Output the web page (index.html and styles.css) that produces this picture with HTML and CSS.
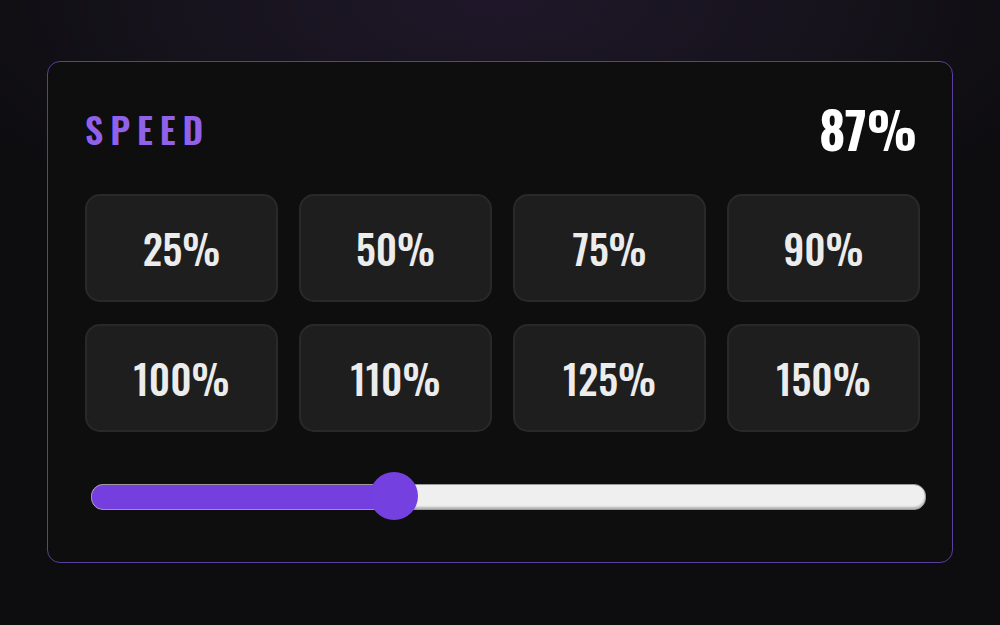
FILE: index.html
```html
<!DOCTYPE html>
<html lang="en">
<head>
    <meta charset="UTF-8">
    <meta name="viewport" content="width=device-width, initial-scale=1.0">
    <link rel="stylesheet" href="styles.css">
</head>
<body>
    <div id="panel">
        <div class="panel-header">
            <h2 class="title">SPEED</h2>
            <span class="value">87%</span>
        </div>
        <div class="presets">
            <button class="preset">25%</button>
            <button class="preset">50%</button>
            <button class="preset">75%</button>
            <button class="preset">90%</button>
            <button class="preset">100%</button>
            <button class="preset">110%</button>
            <button class="preset">125%</button>
            <button class="preset">150%</button>
        </div>
        <div class="slider">
            <div class="track">
                <div class="fill" style="width: 36.3%"></div>
            </div>
            <div class="thumb" style="left: 36.3%"></div>
        </div>
    </div>
</body>
</html>
```

FILE: styles.css
```css
body {
    margin: 0;
    height: 625px;
    background: radial-gradient(ellipse 600px 260px at 50% 0%, #1f1729 0%, #16131c 55%, #0d0c0f 100%);
    background-color: #0d0c0f;
    font-family: "Oswald", "Liberation Sans Narrow", "DejaVu Sans Condensed", "Roboto Condensed", sans-serif;
    padding: 61px 47px 0;
    box-sizing: border-box;
}
#panel {
    background-color: #0e0e0e;
    border: 1px solid #5b3f9c;
    border-radius: 13px;
    height: 502px;
    box-sizing: border-box;
    padding: 0 32px 0 37px;
}
.panel-header {
    display: flex;
    justify-content: space-between;
    align-items: center;
    height: 132px;
    padding-right: 3px;
}
.title {
    margin: 0;
    color: #9261ea;
    font-size: 36px;
    font-weight: 600;
    letter-spacing: 7px;
}
.value {
    color: #ffffff;
    font-size: 50px;
    font-weight: bold;
}
.presets {
    display: grid;
    grid-template-columns: repeat(4, 1fr);
    gap: 22px 21px;
}
.preset {
    height: 108px;
    background-color: #1e1e1e;
    border: 2px solid #292929;
    border-radius: 15px;
    color: #ececec;
    font-family: inherit;
    font-size: 40px;
    font-weight: 500;
}
.slider {
    position: relative;
    margin: 52px 0 0 6px;
    height: 26px;
    margin-right: -6px;
}
.track {
    height: 24px;
    background-color: #efefef;
    border-radius: 12px;
    border: 1px solid #9a9a9a;
    box-shadow: inset 0 -2px 2px #b5b5b5;
    overflow: hidden;
}
.fill {
    height: 100%;
    background-color: #753fe0;
}
.thumb {
    position: absolute;
    top: -12px;
    width: 48px;
    height: 48px;
    margin-left: -24px;
    border-radius: 50%;
    background-color: #7540e0;
}
```
